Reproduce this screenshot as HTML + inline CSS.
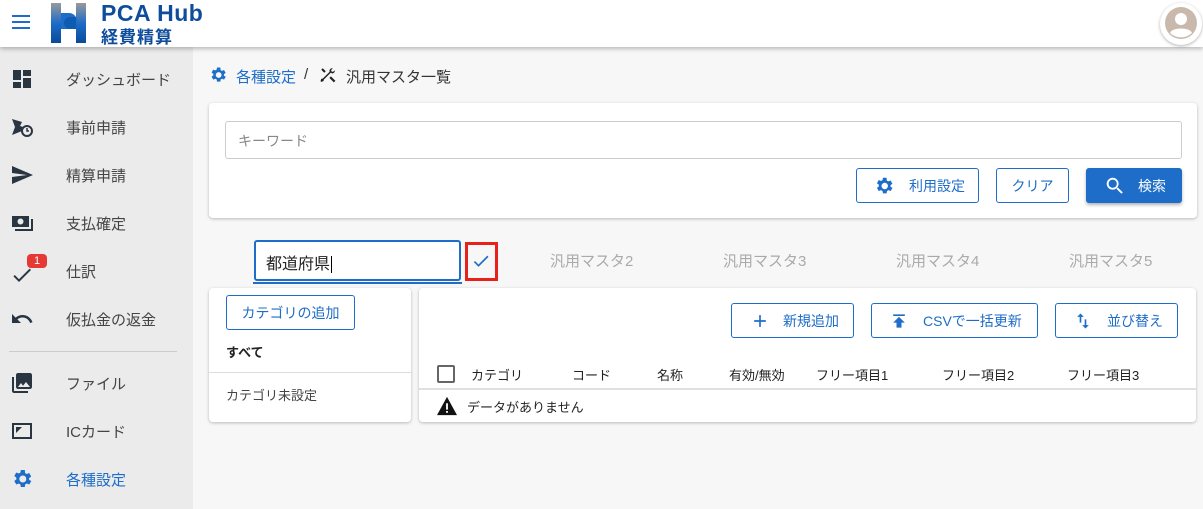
<!DOCTYPE html>
<html><head><meta charset="utf-8"><style>
*{box-sizing:border-box;margin:0;padding:0}
body{width:1203px;height:509px;overflow:hidden;background:#f7f7f7;font-family:"Liberation Sans","Noto Sans CJK JP",sans-serif;color:#333;position:relative;font-size:14px}
.abs{position:absolute}
.hdr{left:0;top:0;width:1203px;height:47px;background:#fff;box-shadow:0 2px 4px rgba(0,0,0,.25);z-index:5}
.side{left:0;top:47px;width:193px;height:462px;background:#ebebeb}
.item{position:absolute;left:0;width:193px;height:48px;display:flex;align-items:center}
.item svg{position:absolute;left:10px;width:24px;height:24px;fill:#2a3542}
.item span{position:absolute;left:66px;font-size:15px;color:#444}
.card{background:#fff;border-radius:4px;box-shadow:0 1px 3px rgba(0,0,0,.25)}
.btn{position:absolute;border:1px solid #1e6dc8;border-radius:3px;color:#1e6dc8;font-size:14px;display:flex;align-items:center;background:#fff}
.btn svg{fill:#1e6dc8;position:absolute}
.tab{position:absolute;top:250px;font-size:15px;color:#aaa}
.col{position:absolute;top:365px;font-size:13px;color:#222}
</style></head><body>
<div class="abs hdr">
<svg class="abs" style="left:12px;top:15px" width="18" height="14"><rect y="0" width="18" height="2" fill="#1e6dc8"/><rect y="6" width="18" height="2" fill="#1e6dc8"/><rect y="12" width="18" height="2" fill="#1e6dc8"/></svg>
<svg class="abs" style="left:50px;top:3px" width="38" height="40"><defs><linearGradient id="g" x1="0" x2="0" y1="0" y2="1"><stop offset="0" stop-color="#999"/><stop offset=".5" stop-color="#1e6dc8"/><stop offset="1" stop-color="#0a4a9a"/></linearGradient></defs><rect x="1" y="0" width="10" height="40" fill="url(#g)"/><rect x="26" y="0" width="10" height="40" fill="url(#g)"/><path d="M11 10h8a8 8 0 010 16h-8z" fill="#1e6dc8"/><path d="M26 14h-6a6 6 0 000 12h6z" fill="#0d5cb0"/></svg>
<div class="abs" style="left:101px;top:0px;font-size:23px;font-weight:bold;color:#0f4d9c;letter-spacing:.5px">PCA Hub</div>
<div class="abs" style="left:101px;top:23px;font-size:17px;font-weight:bold;color:#0f4d9c;letter-spacing:1px">経費精算</div>
<div class="abs" style="left:1160px;top:3px;width:42px;height:42px;border-radius:50%;background:#fff;box-shadow:0 1px 3px rgba(0,0,0,.3)"></div>
<svg class="abs" style="left:1165px;top:7px" width="32" height="32"><circle cx="16" cy="16" r="16" fill="#c9b9ad"/><circle cx="16" cy="12" r="6" fill="#fff"/><path d="M5 26c2-6 20-6 22 0a16 16 0 01-22 0z" fill="#fff"/></svg>
</div>
<div class="abs side">
<div class="item" style="top:8px"><svg viewBox="0 0 24 24"><path d="M3 13h8V3H3zm0 8h8v-6H3zm10 0h8V11h-8zm0-18v6h8V3z"/></svg><span>ダッシュボード</span></div>
<div class="item" style="top:56px"><svg viewBox="0 0 24 24"><path d="M2 4l10 3-2 4 3 1a6 6 0 00-1 4l-10 4 3-8z"/><circle cx="17" cy="16" r="5" fill="none" stroke="#2a3542" stroke-width="2"/><path d="M17 13v3h2" stroke="#2a3542" stroke-width="1.5" fill="none"/></svg><span>事前申請</span></div>
<div class="item" style="top:104px"><svg viewBox="0 0 24 24"><path d="M2 21l21-9L2 3v7l15 2-15 2z"/></svg><span>精算申請</span></div>
<div class="item" style="top:152px"><svg viewBox="0 0 24 24"><path d="M2 5h17v11H2zm19 3v10H5v2h18V8z"/><circle cx="10.5" cy="10.5" r="3" fill="#ebebeb"/></svg><span>支払確定</span></div>
<div class="item" style="top:200px"><svg viewBox="0 0 24 24" style="top:16px"><path d="M9 16.2L4.8 12l-1.4 1.4L9 19 21 7l-1.4-1.4z"/></svg><span>仕訳</span></div>
<div class="abs" style="left:27px;top:207px;width:20px;height:14px;background:#e53935;border-radius:4px;color:#fff;font-size:11px;text-align:center;line-height:14px">1</div>
<div class="item" style="top:248px"><svg viewBox="0 0 24 24"><path d="M12.5 8c-2.6 0-5 1-6.9 2.6L2 7v9h9l-3.6-3.6c1.4-1.2 3.2-1.9 5.1-1.9 3.5 0 6.5 2.3 7.6 5.5l2.4-.8C21.1 11 17.1 8 12.5 8z"/></svg><span>仮払金の返金</span></div>
<div class="abs" style="left:9px;top:304px;width:168px;height:1px;background:#ccc"></div>
<div class="item" style="top:312px"><svg viewBox="0 0 24 24"><path d="M22 16V4c0-1.1-.9-2-2-2H8c-1.1 0-2 .9-2 2v12c0 1.1.9 2 2 2h12c1.1 0 2-.9 2-2zm-11-4l2 2.7 3-3.7 4 5H8zM2 6v14c0 1.1.9 2 2 2h14v-2H4V6z"/></svg><span>ファイル</span></div>
<div class="item" style="top:360px"><svg viewBox="0 0 24 24"><path d="M2 4h20v16H2zm2 2v12h16V6zm2 2h6l-6 6z"/></svg><span>ICカード</span></div>
<div class="item" style="top:408px"><svg viewBox="0 0 24 24" style="fill:#1e6dc8"><path d="M19.1 12.9a7 7 0 000-1.8l2.1-1.6-2-3.5-2.5 1a7 7 0 00-1.6-.9L14.8 3h-4l-.4 2.6a7 7 0 00-1.6.9l-2.5-1-2 3.5 2.1 1.6a7 7 0 000 1.8l-2.1 1.6 2 3.5 2.5-1c.5.4 1 .7 1.6.9l.4 2.6h4l.4-2.6c.6-.2 1.1-.5 1.6-.9l2.5 1 2-3.5zM12.8 15.5a3.5 3.5 0 110-7 3.5 3.5 0 010 7z"/></svg><span style="color:#1e6dc8">各種設定</span></div>
</div>
<!-- breadcrumb -->
<svg class="abs" style="left:208px;top:65px" width="20" height="20" viewBox="0 0 24 24" fill="#1e6dc8"><path d="M19.1 12.9a7 7 0 000-1.8l2.1-1.6-2-3.5-2.5 1a7 7 0 00-1.6-.9L14.8 3h-4l-.4 2.6a7 7 0 00-1.6.9l-2.5-1-2 3.5 2.1 1.6a7 7 0 000 1.8l-2.1 1.6 2 3.5 2.5-1c.5.4 1 .7 1.6.9l.4 2.6h4l.4-2.6c.6-.2 1.1-.5 1.6-.9l2.5 1 2-3.5zM12.8 15.5a3.5 3.5 0 110-7 3.5 3.5 0 010 7z"/></svg>
<div class="abs" style="left:236px;top:66px;font-size:15px;color:#1e6dc8">各種設定</div>
<div class="abs" style="left:304px;top:66px;font-size:15px;color:#333">/</div>
<svg class="abs" style="left:319px;top:66px" width="18" height="18" viewBox="0 0 24 24" fill="#222"><path d="M13.8 15.9l2.1-2.1 6 6-2.1 2.1z"/><path d="M17.5 10a3.5 3.5 0 003.4-4.4l-2.2 2.2-2-.5-.5-2 2.2-2.2A3.5 3.5 0 0014 6.5c0 .4 0 .8.2 1.1L5 16.8l-2 .4-1 3 1 1 3-1 .4-2 9.2-9.2c.3.1.6.2.9.2z"/><path d="M3 5l2-2 4 4-2 2z"/></svg>
<div class="abs" style="left:346px;top:66px;font-size:15px;color:#333">汎用マスタ一覧</div>
<!-- search card -->
<div class="abs card" style="left:209px;top:103px;width:988px;height:115px"></div>
<div class="abs" style="left:225px;top:121px;width:957px;height:38px;border:1px solid #ccc;border-radius:3px;font-size:14px;color:#888;padding:9px 12px">キーワード</div>
<div class="btn" style="left:856px;top:168px;width:123px;height:35px"><svg style="left:16px" width="22" height="22" viewBox="0 0 24 24"><path d="M19.1 12.9a7 7 0 000-1.8l2.1-1.6-2-3.5-2.5 1a7 7 0 00-1.6-.9L14.8 3h-4l-.4 2.6a7 7 0 00-1.6.9l-2.5-1-2 3.5 2.1 1.6a7 7 0 000 1.8l-2.1 1.6 2 3.5 2.5-1c.5.4 1 .7 1.6.9l.4 2.6h4l.4-2.6c.6-.2 1.1-.5 1.6-.9l2.5 1 2-3.5zM12.8 15.5a3.5 3.5 0 110-7 3.5 3.5 0 010 7z"/></svg><span style="margin-left:52px">利用設定</span></div>
<div class="btn" style="left:996px;top:168px;width:73px;height:35px;justify-content:center">クリア</div>
<div class="btn" style="left:1086px;top:168px;width:96px;height:35px;background:#1e6dc8;color:#fff;box-shadow:0 2px 3px rgba(0,0,0,.3)"><svg style="left:17px;fill:#fff" width="22" height="22" viewBox="0 0 24 24"><path d="M15.5 14h-.8l-.3-.3A6.5 6.5 0 109.5 16a6.5 6.5 0 004.2-1.6l.3.3v.8l5 5 1.5-1.5zm-6 0a4.5 4.5 0 110-9 4.5 4.5 0 010 9z"/></svg><span style="margin-left:51px">検索</span></div>
<!-- tabs -->
<div class="abs" style="left:254px;top:240px;width:207px;height:41px;border:2px solid #1e6dc8;border-radius:3px;background:#fff;font-size:16px;color:#222;padding:8px 10px">都道府県<span style="border-left:1px solid #000;margin-left:1px"></span></div>
<div class="abs" style="left:253px;top:282px;width:209px;height:2px;background:#1e6dc8"></div>
<div class="abs" style="left:465px;top:242px;width:33px;height:39px;border:3px solid #e8221a"></div>
<svg class="abs" style="left:471px;top:251px" width="20" height="20" viewBox="0 0 24 24" fill="#1e6dc8"><path d="M9 16.2L4.8 12l-1.4 1.4L9 19 21 7l-1.4-1.4z"/></svg>
<div class="tab" style="left:550px">汎用マスタ2</div>
<div class="tab" style="left:723px">汎用マスタ3</div>
<div class="tab" style="left:896px">汎用マスタ4</div>
<div class="tab" style="left:1069px">汎用マスタ5</div>
<!-- left card -->
<div class="abs card" style="left:209px;top:288px;width:202px;height:134px"></div>
<div class="btn" style="left:226px;top:295px;width:129px;height:35px;justify-content:center;font-size:14px">カテゴリの追加</div>
<div class="abs" style="left:226px;top:342px;font-size:13px;font-weight:bold;color:#222">すべて</div>
<div class="abs" style="left:209px;top:372px;width:202px;height:1px;background:#ddd"></div>
<div class="abs" style="left:226px;top:385px;font-size:13px;color:#444">カテゴリ未設定</div>
<!-- right card -->
<div class="abs card" style="left:419px;top:288px;width:777px;height:134px"></div>
<div class="btn" style="left:731px;top:303px;width:123px;height:35px"><svg style="left:18px" width="20" height="20" viewBox="0 0 24 24"><path d="M19 13h-6v6h-2v-6H5v-2h6V5h2v6h6z"/></svg><span style="margin-left:51px">新規追加</span></div>
<div class="btn" style="left:871px;top:303px;width:167px;height:35px"><svg style="left:17px" width="20" height="20" viewBox="0 0 24 24"><path d="M5 4v2h14V4zm0 10h4v6h6v-6h4l-7-7z"/></svg><span style="margin-left:51px">CSVで一括更新</span></div>
<div class="btn" style="left:1055px;top:303px;width:123px;height:35px"><svg style="left:17px" width="20" height="20" viewBox="0 0 24 24"><path d="M16 17V10h-2v7h-3l4 4 4-4zM9 3L5 7h3v7h2V7h3z"/></svg><span style="margin-left:51px">並び替え</span></div>
<div class="abs" style="left:437px;top:365px;width:18px;height:18px;border:2px solid #666;border-radius:2px"></div>
<div class="col" style="left:471px">カテゴリ</div>
<div class="col" style="left:572px">コード</div>
<div class="col" style="left:657px">名称</div>
<div class="col" style="left:729px">有効/無効</div>
<div class="col" style="left:816px">フリー項目1</div>
<div class="col" style="left:942px">フリー項目2</div>
<div class="col" style="left:1067px">フリー項目3</div>
<div class="abs" style="left:419px;top:388px;width:777px;height:2px;background:#e0e0e0"></div>
<svg class="abs" style="left:436px;top:396px" width="22" height="20" viewBox="0 0 24 22"><path d="M12 1L1 21h22z" fill="#111"/><rect x="11" y="8" width="2" height="7" fill="#fff"/><rect x="11" y="16.5" width="2" height="2" fill="#fff"/></svg>
<div class="abs" style="left:467px;top:397px;font-size:13px;color:#222">データがありません</div>
</body></html>
